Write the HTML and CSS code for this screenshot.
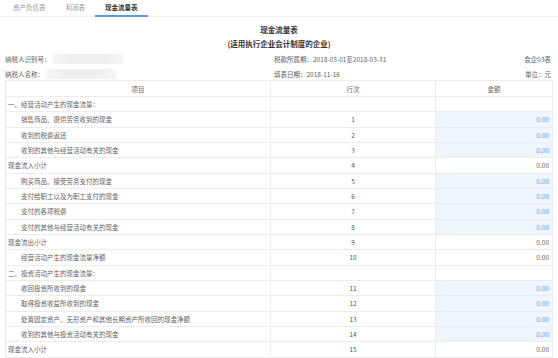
FILE: index.html
```html
<!DOCTYPE html>
<html lang="zh-CN">
<head>
  <meta charset="UTF-8">
  <title>现金流量表</title>
  <link rel="stylesheet" href="styles.css">
</head>
<body>
  <div class="tabs">
    <span class="tab">资产负债表</span>
    <span class="tab">利润表</span>
    <span class="tab ativo">现金流量表</span>
  </div>

  <div class="pagina">
    <h1 class="titulo">现金流量表</h1>
    <h2 class="subtitulo">(适用执行企业会计制度的企业)</h2>

    <div class="cabecalho">
      <div class="info">
        <div class="info-esq">纳税人识别号：<span class="borrado"></span></div>
        <div class="info-meio">税款所属期：2018-03-01至2018-03-31</div>
        <div class="info-dir">会企03表</div>
      </div>
      <div class="info">
        <div class="info-esq">纳税人名称：<span class="borrado"></span></div>
        <div class="info-meio">填表日期：2018-11-16</div>
        <div class="info-dir">单位：元</div>
      </div>
    </div>

    <table class="tabela">
      <colgroup>
        <col class="col-item">
        <col class="col-linha">
        <col>
      </colgroup>
      <thead>
        <tr><th>项目</th><th>行次</th><th>金额</th></tr>
      </thead>
      <tbody>
        <tr><td>一、经营活动产生的现金流量：</td><td></td><td></td></tr>
        <tr><td class="recuo">销售商品、提供劳务收到的现金</td><td>1</td><td class="valor editavel">0.00</td></tr>
        <tr><td class="recuo">收到的税费返还</td><td>2</td><td class="valor editavel">0.00</td></tr>
        <tr><td class="recuo">收到的其他与经营活动有关的现金</td><td>3</td><td class="valor editavel">0.00</td></tr>
        <tr><td>现金流入小计</td><td>4</td><td class="valor">0.00</td></tr>
        <tr><td class="recuo">购买商品、接受劳务支付的现金</td><td>5</td><td class="valor editavel">0.00</td></tr>
        <tr><td class="recuo">支付给职工以及为职工支付的现金</td><td>6</td><td class="valor editavel">0.00</td></tr>
        <tr><td class="recuo">支付的各项税费</td><td>7</td><td class="valor editavel">0.00</td></tr>
        <tr><td class="recuo">支付的其他与经营活动有关的现金</td><td>8</td><td class="valor editavel">0.00</td></tr>
        <tr><td>现金流出小计</td><td>9</td><td class="valor">0.00</td></tr>
        <tr><td class="recuo">经营活动产生的现金流量净额</td><td>10</td><td class="valor">0.00</td></tr>
        <tr><td>二、投资活动产生的现金流量：</td><td></td><td></td></tr>
        <tr><td class="recuo">收回投资所收到的现金</td><td>11</td><td class="valor editavel">0.00</td></tr>
        <tr><td class="recuo">取得投资收益所收到的现金</td><td>12</td><td class="valor editavel">0.00</td></tr>
        <tr><td class="recuo">处置固定资产、无形资产和其他长期资产所收回的现金净额</td><td>13</td><td class="valor editavel">0.00</td></tr>
        <tr><td class="recuo">收到的其他与投资活动有关的现金</td><td>14</td><td class="valor editavel">0.00</td></tr>
        <tr><td>现金流入小计</td><td>15</td><td class="valor">0.00</td></tr>
      </tbody>
    </table>
  </div>
</body>
</html>
```

FILE: styles.css
```css
* {
  box-sizing: border-box;
}

html {
  overflow: hidden;
}

body {
  margin: 0;
  font-family: "Noto Sans CJK SC", "Noto Sans", sans-serif;
  font-size: 6.5px;
  color: #5f5f5f;
  background-color: #fff;
}

.tabs {
  display: flex;
  height: 17px;
  padding-left: 3px;
  border-bottom: 1px solid #eee;
}

.tab {
  padding: 0 10px;
  line-height: 14px;
  color: #999;
}

.tab.ativo {
  color: #333;
  font-weight: bold;
  border-bottom: 2px solid #5a9be6;
  height: 17px;
}

.pagina {
  padding: 0 5px;
}

.titulo,
.subtitulo {
  margin: 0;
  text-align: center;
  font-size: 7.5px;
  font-weight: bold;
  color: #333;
  line-height: 10px;
}

.titulo {
  margin-top: 8px;
}

.subtitulo {
  margin-top: 4px;
}

.cabecalho {
  padding-top: 2px;
}

.info {
  display: flex;
  align-items: center;
  height: 15px;
}

.info-esq {
  width: 269px;
  display: flex;
  align-items: center;
}

.info-meio {
  flex: 1;
}

.info-dir {
  padding-right: 2px;
}

.borrado {
  display: inline-block;
  width: 70px;
  height: 10px;
  background: linear-gradient(to right, #f5f5f5, #eeeeee 30%, #eeeeee 70%, #f5f5f5);
  border-radius: 2px;
  margin-left: 2px;
}

.tabela {
  width: 100%;
  border-collapse: collapse;
  table-layout: fixed;
  margin-top: -1px;
}

.col-item {
  width: 265px;
}

.col-linha {
  width: 165px;
}

.tabela th,
.tabela td {
  border: 1px solid #ececec;
  padding: 0 2px;
  white-space: nowrap;
  overflow: hidden;
}

.tabela th {
  height: 16px;
  font-weight: normal;
  text-align: center;
}

.tabela td {
  height: 15.33px;
}

.tabela td:nth-child(2) {
  text-align: center;
  color: #555;
}

.tabela td.recuo {
  padding-left: 15px;
}

.valor {
  text-align: right;
  padding-right: 3px !important;
}

.editavel {
  background-color: #eef5fd;
  color: #5ea1e6;
}
```
